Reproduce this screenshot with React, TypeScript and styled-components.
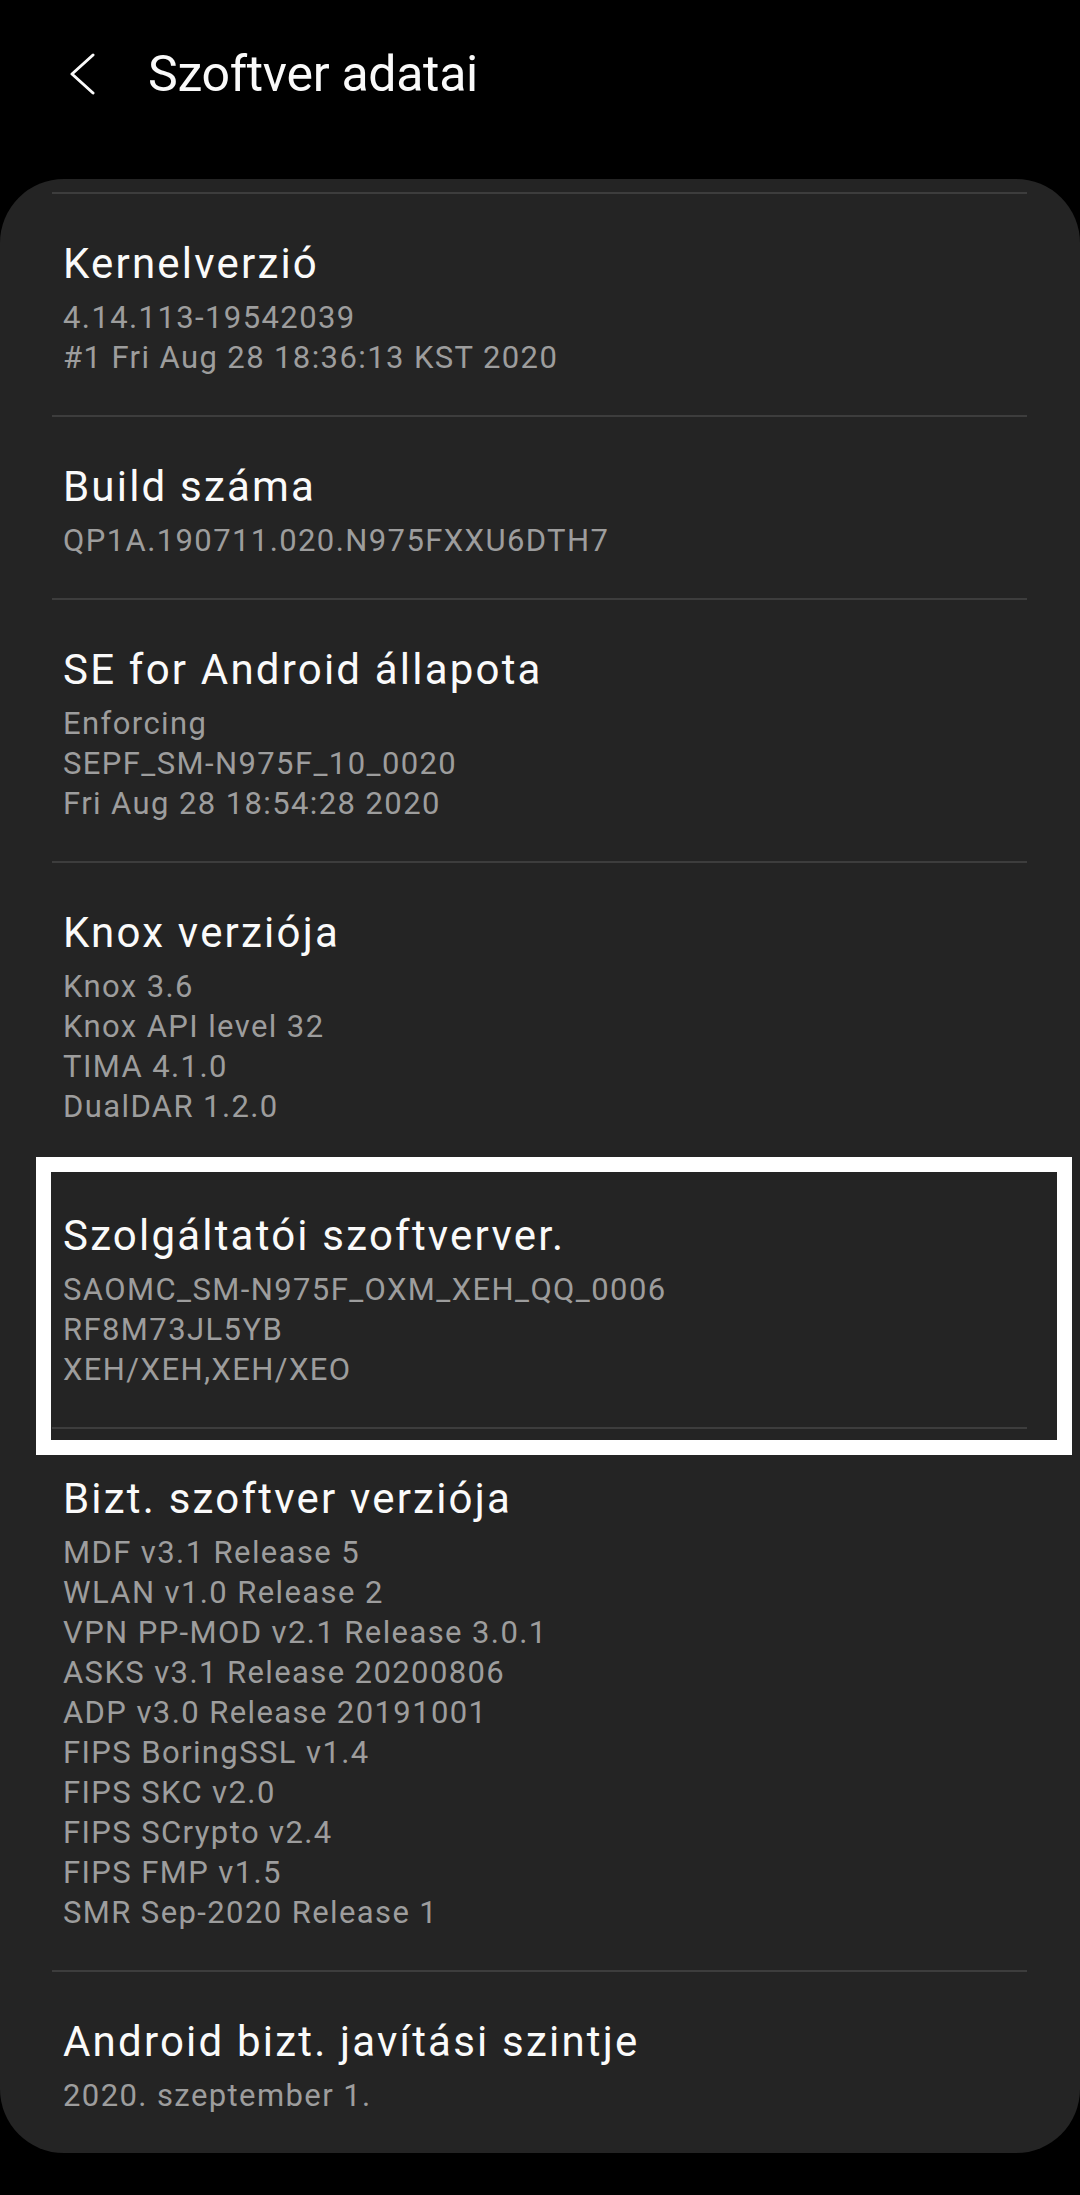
import React, { FC } from 'react';
import styled, { createGlobalStyle } from 'styled-components';

const GlobalStyle = createGlobalStyle`
  html, body {
    margin: 0;
    padding: 0;
    background: #000;
  }
  body {
    font-family: Roboto, 'Noto Sans', 'Liberation Sans', sans-serif;
    -webkit-font-smoothing: antialiased;
  }
`;

const Page = styled.div`
  width: 1080px;
  min-height: 2195px;
  background: #000;
  overflow: hidden;
`;

const Header = styled.header`
  height: 148px;
  display: flex;
  align-items: center;
  padding-left: 66px;
  gap: 50px;
`;

const BackButton = styled.button`
  width: 32px;
  height: 44px;
  padding: 0;
  border: none;
  background: none;
  display: flex;
  align-items: center;
  justify-content: center;
`;

const Title = styled.h1`
  margin: 0;
  color: #fafafa;
  font-size: 50px;
  font-weight: 400;
  letter-spacing: -0.3px;
`;

const Card = styled.main`
  margin-top: 31px;
  background: #242424;
  border-radius: 64px;
  padding: 13px 53px 0 52px;
`;

const Item = styled.section<{ $highlighted?: boolean }>`
  position: relative;
  border-top: 2px solid #3d3d3d;
  padding: 42px 11px 37px;
  ${p =>
    p.$highlighted &&
    `
    &::after {
      content: '';
      position: absolute;
      left: -16px;
      right: -45px;
      top: -9px;
      bottom: -28px;
      border: 15px solid #fff;
      pointer-events: none;
    }
  `}
`;

const ItemTitle = styled.h2`
  margin: 0 0 6px;
  color: #fafafa;
  font-size: 42px;
  line-height: 56px;
  font-weight: 400;
  letter-spacing: 2.2px;
`;

const Line = styled.div`
  color: #9d9d9d;
  font-size: 31px;
  line-height: 40px;
  letter-spacing: 1.4px;
`;

type Info = { title: string; lines: string[]; highlighted?: boolean };

const items: Info[] = [
  { title: 'Kernelverzió', lines: ['4.14.113-19542039', '#1 Fri Aug 28 18:36:13 KST 2020'] },
  { title: 'Build száma', lines: ['QP1A.190711.020.N975FXXU6DTH7'] },
  {
    title: 'SE for Android állapota',
    lines: ['Enforcing', 'SEPF_SM-N975F_10_0020', 'Fri Aug 28 18:54:28 2020'],
  },
  { title: 'Knox verziója', lines: ['Knox 3.6', 'Knox API level 32', 'TIMA 4.1.0', 'DualDAR 1.2.0'] },
  {
    title: 'Szolgáltatói szoftverver.',
    lines: ['SAOMC_SM-N975F_OXM_XEH_QQ_0006', 'RF8M73JL5YB', 'XEH/XEH,XEH/XEO'],
    highlighted: true,
  },
  {
    title: 'Bizt. szoftver verziója',
    lines: [
      'MDF v3.1 Release 5',
      'WLAN v1.0 Release 2',
      'VPN PP-MOD v2.1 Release 3.0.1',
      'ASKS v3.1 Release 20200806',
      'ADP v3.0 Release 20191001',
      'FIPS BoringSSL v1.4',
      'FIPS SKC v2.0',
      'FIPS SCrypto v2.4',
      'FIPS FMP v1.5',
      'SMR Sep-2020 Release 1',
    ],
  },
  { title: 'Android bizt. javítási szintje', lines: ['2020. szeptember 1.'] },
];

const ChevronLeft: FC = () => (
  <svg width="28" height="42" viewBox="0 0 28 42" fill="none">
    <path d="M25 2 L4 21 L25 40" stroke="#fafafa" strokeWidth="3" strokeLinecap="round" strokeLinejoin="round" />
  </svg>
);

const App: FC = () => {
  return (
    <Page>
      <GlobalStyle />
      <Header>
        <BackButton aria-label='Vissza'>
          <ChevronLeft />
        </BackButton>
        <Title>Szoftver adatai</Title>
      </Header>
      <Card>
        {items.map(item => (
          <Item key={item.title} $highlighted={item.highlighted}>
            <ItemTitle>{item.title}</ItemTitle>
            {item.lines.map(line => (
              <Line key={line}>{line}</Line>
            ))}
          </Item>
        ))}
      </Card>
    </Page>
  );
};

export default App;
